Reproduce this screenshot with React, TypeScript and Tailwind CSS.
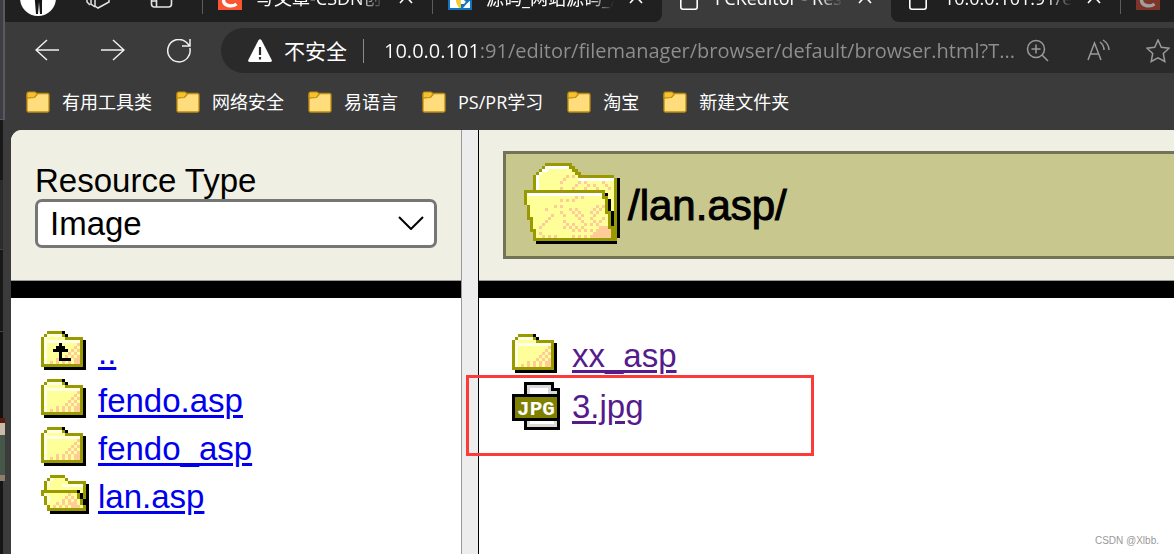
import * as React from "react";
import { clsx } from "clsx";

const UI_FONT = "font-['Open_Sans','Noto_Sans_CJK_SC',sans-serif]";
const PAGE_FONT = "font-['Liberation_Sans',Arial,sans-serif]";

const BOOKMARKS = ["有用工具类", "网络安全", "易语言", "PS/PR学习", "淘宝", "新建文件夹"];

type IconName = "folder" | "folderUp" | "folderOpen";
type Entry = { name: string; icon: IconName | "jpg" };

const FOLDERS: Entry[] = [
  { name: "..", icon: "folderUp" },
  { name: "fendo.asp", icon: "folder" },
  { name: "fendo_asp", icon: "folder" },
  { name: "lan.asp", icon: "folderOpen" },
];

const FILES: Entry[] = [
  { name: "xx_asp", icon: "folder" },
  { name: "3.jpg", icon: "jpg" },
];

// 16x16 sprites, one character per pixel
const PALETTE: Record<string, string> = {
  O: "#999900",
  K: "#000000",
  w: "#ffffe6",
  y: "#ffff99",
  p: "#ffcc99",
};

const SPRITES: Record<IconName, string[]> = {
  folder: [
    "................",
    "..OOOOOK........",
    ".OwwwwwOK.......",
    "OwyyyyyyOOOOOO..",
    "OwwwwwwwwwwwwOK.",
    "OwyyyyyyyyyypOK.",
    "OwyyyyyyyyypyOK.",
    "OwyyyyyyyypypOK.",
    "OwyyyyyyypypyOK.",
    "OwyyyyyypypypOK.",
    "OwyyypypypyppOK.",
    "OwypypypypyppOK.",
    "OOOOOOOOOOOOOOK.",
    ".KKKKKKKKKKKKKK.",
  ],
  folderUp: [
    "................",
    "..OOOOOK........",
    ".OwwwwwOK.......",
    "OwyyyyyyOOOOOO..",
    "OwwwwwwwwwwwwOK.",
    "OwyyyyKyyyyypOK.",
    "OwyyyKKKyyypyOK.",
    "OwyyKKKKKypypOK.",
    "OwyyyyKyypypyOK.",
    "OwyyyyKypypypOK.",
    "OwyyypKKKKyppOK.",
    "OwypypypypyppOK.",
    "OOOOOOOOOOOOOOK.",
    ".KKKKKKKKKKKKKK.",
  ],
  folderOpen: [
    "................",
    "...OOOOO........",
    "..OwyyyyO.......",
    ".OwyyyyyyOOOOOO.",
    ".OwyyyywwwwwwwOK",
    ".OyyyyyyyyyyyyOK",
    "OOOOOOOOOOOOKyOK",
    "OwyyyyyyypyyOKOK",
    ".OwyyyyypypyOKOK",
    ".OwyyyypypypyOKK",
    ".OyyypypypppyOKK",
    "..OypypypypppyOK",
    "..OOOOOOOOOOOOOK",
    "...KKKKKKKKKKKKK",
  ],
};

function Sprite({ name }: { name: IconName }) {
  return (
    <svg viewBox="0 0 16 16" shapeRendering="crispEdges" className="size-12 shrink-0" aria-hidden>
      {SPRITES[name].flatMap((row, y) =>
        [...row].map((c, x) => (PALETTE[c] ? <rect key={`${x}-${y}`} x={x} y={y} width="1" height="1" fill={PALETTE[c]} /> : null)),
      )}
    </svg>
  );
}

function JpgIcon() {
  return (
    <svg viewBox="0 0 16 16" shapeRendering="crispEdges" className="size-12 shrink-0" aria-hidden>
      <path d="M4 0h10v2h2v14H4z" fill="#000" />
      <path d="M14 0h2v2h-2z" fill="#fff" />
      <path d="M5 1h8v2h2v12H5z" fill="#d9d9d9" />
      <path d="M6 2h6v2H6zM6 13h8v1H6z" fill="#fff" />
      <path d="M0 4h16v9H0z" fill="#000" />
      <path d="M1 5h14v7H1z" fill="#808000" />
      <text
        x="8"
        y="11"
        textAnchor="middle"
        fill="#fff"
        fontSize="7"
        fontWeight="700"
        className="font-['Liberation_Mono',monospace]"
      >
        JPG
      </text>
    </svg>
  );
}

function BigFolder() {
  const dots: React.ReactNode[] = [];
  for (let y = 6; y < 27; y++) {
    const front = y > 12;
    if (y > 10 && !front) continue;
    const end = front ? 26 + Math.floor((y - 12) / 4) : 30;
    for (let x = 5; x < end; x++) {
      if (!front && (x < 9 || (x > 16 && y < 8))) continue;
      // density grows towards the lower right corner
      const density = front ? (x - 4) / 46 + (y - 13) / 34 : (x - 8) / 40 + (y - 6) / 20;
      const noise = ((x * 37 + y * 61 + x * y * 13) % 29) / 29;
      const solid = front && y > 22 && x > 21 + (26 - y);
      if (solid || ((x + y) % 2 === 0 && noise < density)) {
        dots.push(<rect key={`${x}-${y}`} x={x} y={y} width="1" height="1" fill="#ffcc99" />);
      }
    }
  }
  return (
    <svg viewBox="0 0 32 32" shapeRendering="crispEdges" className="size-24 shrink-0" aria-hidden>
      <path d="M30 7h2v20h-1v2H4v-2h26z" fill="#000" />
      <path d="M3 12V6h1V5h1V4h1V3h1V2h9v1h1v1h1v1h1v1h11v1h1v20h-4z" fill="#999900" />
      <path d="M4 11V6h1V5h1V4h1V3h8v1h1v1h1v1h1v1h12v4z" fill="#ffff99" />
      <path d="M4 11V6h1V5h1V4h1V3h8v1H8v1H6v1H5v5zM18 7h12v1H18z" fill="#fff" />
      <path d="M27 11h3v16h-2z" fill="#ffff99" />
      <path d="M30 7h1v20h-1z" fill="#999900" />
      <path d="M27 12h1v2h1v4h1v9h-3z" fill="#000" />
      <path d="M0 11h27v2h1v5h1v5h1v4h1v1H3v-3H2v-4H1v-5H0z" fill="#999900" />
      <path d="M1 12h25v2h1v5h1v5h1v3H4v-3H3v-4H2v-4H1z" fill="#ffff99" />
      <path d="M1 12h25v1H1z" fill="#fff" />
      {dots}
    </svg>
  );
}

function BookmarkFolder() {
  return (
    <svg viewBox="0 0 24 22" className="h-[22px] w-6 shrink-0" aria-hidden>
      <rect x="1" y="2.500" width="22" height="18.500" rx="1.500" fill="#ffdc7c" stroke="#bd8b10" strokeWidth="1.300" />
      <path d="M1 7V2.500Q1 1 2.500 1H9l2.500 2-3 3.500Z" fill="#f5c12e" stroke="#bd8b10" strokeWidth="1.200" />
    </svg>
  );
}

function CsdnLogo({ dim }: { dim?: boolean }) {
  return (
    <svg viewBox="0 0 24 24" className="size-6 shrink-0" aria-hidden>
      <rect width="24" height="24" fill={dim ? "#7d3529" : "#fc5531"} />
      <path d="M19 6.500C17 4 7 3.500 5.500 12c-1 9 9 9 13 6" fill="none" stroke={dim ? "#a0a0a0" : "#fff"} strokeWidth="3.400" />
    </svg>
  );
}

function SourceLogo() {
  return (
    <svg viewBox="0 0 24 24" className="size-6 shrink-0" aria-hidden>
      <rect width="24" height="24" fill="#1273be" />
      <path d="M2 2h9v20H2zM15 22l7-8v8z" fill="#fff" />
      <path d="M8 12h5v10h-2l-3-6z" fill="#f3cb2c" />
      <path d="M12 2h10v9l-6 7h-3z" fill="#fff" />
      <path d="M16 5h7v9l-4 3-3-3z" fill="#1273be" />
    </svg>
  );
}

function PageGlyph() {
  return (
    <svg viewBox="0 0 24 24" className="size-6 shrink-0" fill="none" stroke="#fff" strokeWidth="1.600" aria-hidden>
      <path d="M3.800 3Q3.800 1 6 1h8l6.200 6v14q0 2.200-2 2.200H6q-2.200 0-2.200-2.200Z" />
    </svg>
  );
}

type TabProps = { title: string; icon: React.ReactNode; active?: boolean; className?: string };

function BrowserTab({ title, icon, active, className }: TabProps) {
  return (
    <div className={clsx("flex h-12 w-[229px] shrink-0 items-center pl-[15px] pr-4", active && "bg-[#3b3b3b]", className)}>
      {icon}
      <span className="ml-[14px] w-[132px] overflow-hidden whitespace-nowrap text-[18px] leading-6 text-white [mask-image:linear-gradient(90deg,#000_80%,transparent)]">
        {title}
      </span>
      <button type="button" aria-label="Close tab" className="ml-3 flex size-5 items-center justify-center">
        <svg viewBox="0 0 20 20" className="size-5" stroke="#fff" strokeWidth="1.600" aria-hidden>
          <path d="M4 2l12 13M16 2L4 15" />
        </svg>
      </button>
    </div>
  );
}

function TabStrip() {
  return (
    <div className="flex h-[22px] items-end overflow-hidden bg-[#202020]">
      <div className="flex h-12 w-[197px] shrink-0 items-center border-r border-transparent pl-[15px]">
        <svg viewBox="0 0 36 36" className="size-9 shrink-0" aria-hidden>
          <circle cx="18" cy="18" r="18" fill="#fff" />
          <path d="M14 4h9l-1 18v12h-2l-1-12-1 12h-2l-1-12z" fill="#161616" />
        </svg>
        <svg viewBox="0 0 24 24" className="ml-[30px] size-6 shrink-0" fill="none" stroke="#e4e4e4" strokeWidth="1.500" aria-hidden>
          <path d="M1 5v11l3 3M5 4v14l4 3M9 9l5-5h9v12l-11 6-3-2z" />
        </svg>
        <svg viewBox="0 0 24 24" className="ml-10 size-6 shrink-0" fill="none" stroke="#e4e4e4" strokeWidth="1.600" aria-hidden>
          <path d="M1.500 4v14q0 3 3 3h14q3 0 3-3V4q0-3-3-3h-14q-3 0-3 3ZM1.500 15h5M6.500 1v20" />
        </svg>
      </div>
      <div className="h-8 w-px shrink-0 self-end bg-[#5c5c5c] mb-2" />
      <BrowserTab title="写文章-CSDN创作" icon={<CsdnLogo />} />
      <div className="h-8 w-px shrink-0 self-end bg-[#5c5c5c] mb-2" />
      <div className="shrink-0 bg-[#3b3b3b]">
        <BrowserTab title="源码_网站源码_源" icon={<SourceLogo />} className="rounded-br-[8px] bg-[#202020]" />
      </div>
      <BrowserTab title="FCKeditor - Resour" icon={<PageGlyph />} active />
      <div className="shrink-0 bg-[#3b3b3b]">
        <BrowserTab title="10.0.0.101:91/edit" icon={<PageGlyph />} className="rounded-bl-[8px] bg-[#202020]" />
      </div>
      <div className="h-8 w-px shrink-0 self-end bg-[#5c5c5c] mb-2" />
      <div className="flex h-12 flex-1 items-center pl-[15px]">
        <CsdnLogo dim />
      </div>
    </div>
  );
}

function NavButton({ label, children }: { label: string; children: React.ReactNode }) {
  return (
    <button type="button" aria-label={label} className="size-6 shrink-0">
      <svg viewBox="0 0 24 24" className="size-6" fill="none" stroke="#f0f0f0" strokeWidth="1.500" aria-hidden>
        {children}
      </svg>
    </button>
  );
}

function AddressAction({ label, children }: { label: string; children: React.ReactNode }) {
  return (
    <button type="button" aria-label={label} className="ml-9 size-6 shrink-0">
      <svg viewBox="0 0 24 24" className="size-6" fill="none" stroke="#9a9a9a" strokeWidth="1.500" aria-hidden>
        {children}
      </svg>
    </button>
  );
}

function AddressBar() {
  return (
    <div className="flex items-center pl-[30px] pt-[6px]">
      <div className="flex items-center gap-[42px]">
        <NavButton label="Back">
          <path d="M24 11H1M12 1L1 11l11 10" />
        </NavButton>
        <NavButton label="Forward">
          <path d="M0 11h23M12 1l11 10-11 10" />
        </NavButton>
        <NavButton label="Refresh">
          <path d="M22.800 9A11.200 11.200 0 1 1 19 3L22.500 6.500M23 0v7h-8" />
        </NavButton>
      </div>
      <div className="ml-[30px] flex h-[45px] min-w-0 flex-1 items-center rounded-l-full bg-[#2a2a2a] pl-[27px] pr-1">
        <svg viewBox="0 0 24 24" className="size-6 shrink-0" aria-hidden>
          <path d="M10.300 1.500q1.700-2.500 3.400 0l10 19.500q.6 2-1.500 2H1.800q-2.100 0-1.500-2z" fill="#fff" />
          <path d="M12 8v8M12 18v2.500" stroke="#2a2a2a" strokeWidth="2.200" />
        </svg>
        <label htmlFor="address" className="ml-3 whitespace-nowrap text-[21px] leading-7 text-white">
          不安全
        </label>
        <div className="ml-4 h-6 w-px shrink-0 bg-[#8a8a8a]" />
        <input
          id="address"
          type="text"
          defaultValue="10.0.0.101:91/editor/filemanager/browser/default/browser.html?T..."
          className="ml-5 min-w-0 flex-1 bg-[linear-gradient(90deg,#ffffff_92px,#8f8f8f_92px)] bg-clip-text text-[20px] leading-7 text-transparent outline-none"
        />
        <div className="-ml-9 flex">
          <AddressAction label="Zoom">
            <circle cx="10" cy="10" r="8.500" />
            <path d="M16 16l6 6M10 5.500v9M5.500 10h9" />
          </AddressAction>
          <AddressAction label="Read aloud">
            <path d="M2 21L8.500 4 15 21M4.500 15h8M14 3q4 3 4 8M17 1q6 4 6 10" />
          </AddressAction>
          <AddressAction label="Add to favorites">
            <path d="M12 1l3.300 7.200 7.700 1-5.700 5.300 1.500 8L12 18.800 5.200 22.500l1.500-8L1 9.200l7.700-1z" />
          </AddressAction>
        </div>
      </div>
    </div>
  );
}

function BookmarksBar() {
  return (
    <nav className="flex h-[57px] items-center gap-6 pl-[21px]">
      {BOOKMARKS.map((b) => (
        <a key={b} href="#" className="flex shrink-0 items-center gap-3 text-[18px] leading-6 text-white">
          <BookmarkFolder />
          {b}
        </a>
      ))}
    </nav>
  );
}

function EntryLink({ entry, className }: { entry: Entry; className: string }) {
  return (
    <li className={clsx("flex h-12 items-center", className)}>
      {entry.icon === "jpg" ? <JpgIcon /> : <Sprite name={entry.icon} />}
      <a href="#" className="pt-[2px] text-[33px] leading-[46px] underline decoration-[3px] underline-offset-[3px]">
        {entry.name}
      </a>
    </li>
  );
}

function FolderPane() {
  return (
    <aside className="w-[450px] shrink-0">
      <div className="h-[151px] border-b border-[#999999] bg-[#efefe3] pl-6 pr-6 pt-8">
        <label htmlFor="resource-type" className="block text-[33px] leading-[37px] text-black">
          Resource Type
        </label>
        <div className="relative">
          <select
            id="resource-type"
            className="h-[49px] w-full appearance-none rounded-[7px] border-[3px] border-[#767676] bg-white pl-3 text-[33px] leading-[42px] text-black"
          >
            <option>Image</option>
          </select>
          <svg
            viewBox="0 0 26 14"
            className="pointer-events-none absolute right-[13px] top-[17px] h-[14px] w-[26px]"
            fill="none"
            stroke="#000"
            strokeWidth="2"
            aria-hidden
          >
            <path d="M1 1l12 12L25 1" />
          </svg>
        </div>
      </div>
      <div className="h-[17px] bg-black" />
      <ul className="pl-[30px] pt-[30px] text-[#0000ee]">
        {FOLDERS.map((f) => (
          <EntryLink key={f.name} entry={f} className="gap-[9px]" />
        ))}
      </ul>
    </aside>
  );
}

function FilePane() {
  return (
    <main className="relative min-w-0 flex-1">
      <div className="h-[151px] border-b border-[#999999] bg-[#efefe3] pl-6 pt-[21px]">
        <div className="flex h-[108px] items-center gap-2 border-[3px] border-r-0 border-[#737357] bg-[#c8c78d] pl-[18px]">
          <BigFolder />
          <h1 className="pt-[2px] text-[42px] leading-[48px] text-black [-webkit-text-stroke:1px_#000]">/lan.asp/</h1>
        </div>
      </div>
      <div className="h-[17px] bg-black" />
      <ul className="flex flex-col gap-[3px] pl-[33px] pt-[33px] text-[#551a8b]">
        {FILES.map((f) => (
          <EntryLink key={f.name} entry={f} className="gap-3" />
        ))}
      </ul>
      {/* Marker around the uploaded file */}
      <div className="pointer-events-none absolute -left-[13px] top-[245px] h-[81px] w-[348px] border-[3px] border-[#fd3a3a]" />
      <div className="absolute bottom-[5px] right-[15px] text-[10px] leading-4 text-[#999999]">CSDN @Xlbb.</div>
    </main>
  );
}

// Sliver of the desktop left of the browser window
function DesktopEdge() {
  return (
    <div className="flex w-[5px] shrink-0 flex-col bg-[#3b3b3b]" aria-hidden>
      <div className="h-[120px] border-b border-r-2 border-[#5a5a5e] bg-[#3f3c44]" />
      <div className="h-[60px] w-[3px] bg-[#181818]" />
      <div className="h-[70px] w-[3px] border-b border-[#444444] bg-[#2b2b2b]" />
      <div className="h-[82px] w-[3px] border-b border-[#444444] bg-[#181818]" />
      <div className="h-[86px] w-[3px] bg-[#121212]" />
      <div className="h-[5px] bg-[#5a1a10]" />
      <div className="h-[12px] bg-[#c9bba8]" />
      <div className="h-[40px] bg-[#46574a]" />
      <div className="h-[6px] bg-[#8d7d6a]" />
      <div className="w-[3px] flex-1 bg-[#161616]" />
    </div>
  );
}

export default function App() {
  return (
    <div className={clsx("flex min-h-screen overflow-hidden bg-[#3b3b3b]", UI_FONT)}>
      <DesktopEdge />
      <div className="flex min-w-0 flex-1 flex-col">
        <header>
          <TabStrip />
          <AddressBar />
          <BookmarksBar />
        </header>
        <div className={clsx("ml-[6px] flex flex-1 overflow-hidden rounded-tl-[11px] bg-white", PAGE_FONT)}>
          <FolderPane />
          <div className="w-[18px] shrink-0 border-l border-r border-l-[#999999] border-r-black bg-[#ededed]" />
          <FilePane />
        </div>
      </div>
    </div>
  );
}
